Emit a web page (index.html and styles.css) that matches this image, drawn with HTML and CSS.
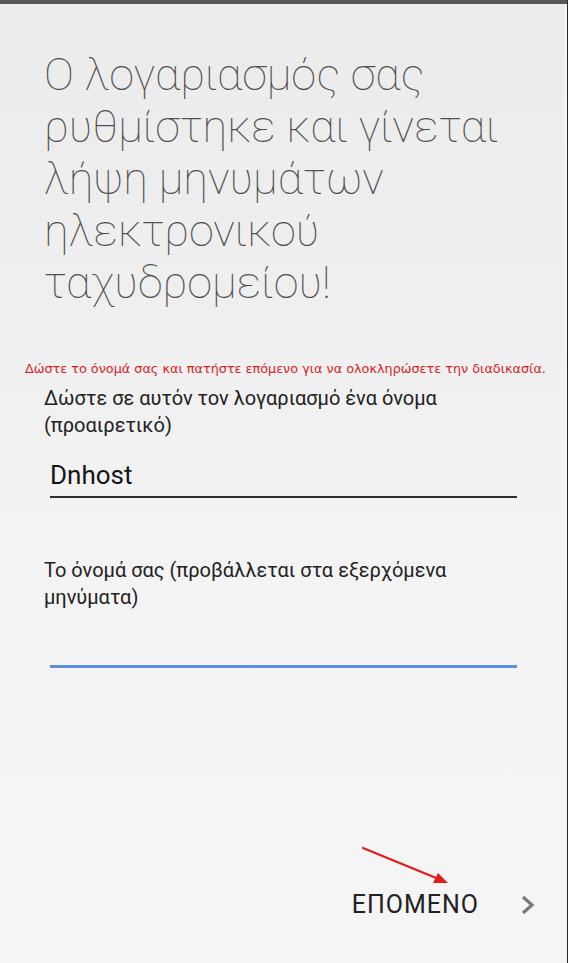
FILE: index.html
```html
<!DOCTYPE html>
<html lang="el">
<head>
<meta charset="utf-8">
<link rel="stylesheet" href="styles.css">
</head>
<body>
<div class="screen">
  <div class="topbar"></div>
  <div class="content">
    <h1 class="title">Ο λογαριασμός σας ρυθμίστηκε και γίνεται λήψη μηνυμάτων ηλεκτρονικού ταχυδρομείου!</h1>
    <p class="notice">Δώστε το όνομά σας και πατήστε επόμενο για να ολοκληρώσετε την διαδικασία.</p>
    <div class="field">
      <label class="label">Δώστε σε αυτόν τον λογαριασμό ένα όνομα (προαιρετικό)</label>
      <div class="input filled">Dnhost</div>
    </div>
    <div class="field second">
      <label class="label">Το όνομά σας (προβάλλεται στα εξερχόμενα μηνύματα)</label>
      <div class="input focused"></div>
    </div>
  </div>
  <div class="footer">
    <span class="next">ΕΠΟΜΕΝΟ</span>
    <svg class="chevron" width="16" height="22" viewBox="0 0 16 22"><path d="M3 3 L12 11 L3 19" fill="none" stroke="#7a7a7a" stroke-width="3.2"/></svg>
  </div>
  <svg class="arrow" width="100" height="50" viewBox="0 0 100 50">
    <line x1="2" y1="2" x2="80" y2="34" stroke="#e21b1b" stroke-width="2.2" stroke-linecap="round"/>
    <polygon points="87,37 72,37 77,27" fill="#e21b1b"/>
  </svg>
</div>
</body>
</html>
```
FILE: styles.css
```css
html, body {
  margin: 0;
  padding: 0;
}
body {
  width: 568px;
  height: 963px;
  overflow: hidden;
  background: #2a2a2a;
}
.screen {
  position: relative;
  width: 567px;
  height: 963px;
  background: linear-gradient(to bottom, #ebebeb 0px, #efefef 300px, #f4f4f4 600px, #f5f5f5 963px);
  box-shadow: inset -3px 0 0 #f3f3f3;
  display: flex;
  flex-direction: column;
}
.topbar {
  height: 4px;
  background: #575757;
  flex: none;
}
.content {
  flex: 1;
  padding: 45px 0 0 44px;
}
.title {
  margin: 0;
  font-family: Roboto, "Noto Sans", sans-serif;
  font-weight: 100;
  font-size: 45px;
  line-height: 52px;
  color: #505050;
  width: 480px;
}
.notice {
  margin: 51px 0 0 -19px;
  font-family: "DejaVu Sans", sans-serif;
  font-size: 12.8px;
  line-height: 17px;
  color: #d81c1f;
  white-space: nowrap;
}
.field {
  margin-top: 8px;
}
.label {
  display: block;
  font-family: Roboto, "Noto Sans", sans-serif;
  font-size: 20px;
  line-height: 27px;
  color: #222;
  width: 480px;
}
.input {
  margin-left: 6px;
  width: 467px;
  box-sizing: border-box;
  font-family: Roboto, "Noto Sans", sans-serif;
  font-size: 26px;
  color: #151515;
}
.filled {
  margin-top: 21px;
  height: 38px;
  line-height: 30px;
  border-bottom: 2px solid #2e2e2e;
}
.second {
  margin-top: 59px;
}
.focused {
  height: 57px;
  border-bottom: 3px solid #5a8fe4;
}
.footer {
  flex: none;
  height: 73px;
  display: flex;
  align-items: flex-start;
  justify-content: flex-end;
  padding: 0 31px 0 0;
}
.next {
  font-family: Roboto, "Noto Sans", sans-serif;
  font-size: 25px;
  line-height: 30px;
  letter-spacing: 1px;
  color: #222;
}
.chevron {
  margin-left: 41px;
  margin-top: 4px;
}
.arrow {
  position: absolute;
  left: 361px;
  top: 846px;
}
```
